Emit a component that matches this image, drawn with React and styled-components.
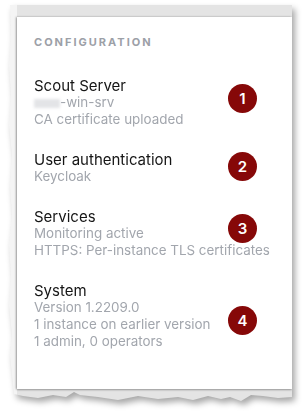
import React from 'react';
import styled, { createGlobalStyle } from 'styled-components';

const GlobalStyle = createGlobalStyle`
  html, body {
    margin: 0;
    padding: 0;
    background: #fff;
    font-family: Inter, "Noto Sans", "Liberation Sans", sans-serif;
  }
`;

const Page = styled.div`
  width: 303px;
  height: 416px;
  overflow: hidden;
  padding: 5px 0 0 8px;
  box-sizing: border-box;
`;

const Shadow = styled.div`
  width: 284px;
  filter: drop-shadow(3px 4px 3px rgba(0, 0, 0, 0.35));
`;

const Sheet = styled.div`
  width: 284px;
  height: 400px;
  box-sizing: border-box;
  padding: 12px 0 0 9px;
  background: linear-gradient(to right, #f4f4f4 0px, #f4f4f4 9px, #e4e4e4 9px);
  clip-path: polygon(
    2px 0, 284px 0, 284px 392px, 270px 393px, 255px 391px, 243px 390px,
    233px 396px, 222px 392px, 213px 394px, 200px 391px, 185px 395px,
    170px 392px, 150px 394px, 130px 391px, 110px 395px, 90px 392px,
    72px 390px, 66px 387px, 58px 392px, 45px 390px, 30px 393px,
    15px 391px, 6px 389px, 4px 370px, 2px 350px, 4px 330px, 1px 300px,
    3px 270px, 1px 240px, 4px 210px, 2px 180px, 4px 150px, 1px 120px,
    3px 90px, 1px 60px, 3px 30px
  );
`;

const Card = styled.div`
  width: 275px;
  height: 372px;
  box-sizing: border-box;
  background: #fff;
  box-shadow: -1px 0 2px rgba(0, 0, 0, 0.3), 0 1px 2px rgba(0, 0, 0, 0.25);
  padding: 18px 17px;
`;

const Heading = styled.div`
  font-size: 11px;
  line-height: 14px;
  font-weight: 700;
  letter-spacing: 2px;
  color: #9ca0a7;
  margin-bottom: 28px;
`;

const List = styled.div`
  display: flex;
  flex-direction: column;
  gap: 23px;
`;

const Section = styled.div`
  position: relative;
`;

const Title = styled.div`
  font-size: 15px;
  line-height: 17px;
  color: #151515;
`;

const Line = styled.div`
  font-size: 13.4px;
  line-height: 17px;
  color: #a2a6ad;
  white-space: nowrap;
`;

const Redacted = styled.span`
  display: inline-block;
  width: 26px;
  height: 9px;
  vertical-align: -1px;
  background: #e3e4e7;
  filter: blur(1.5px);
`;

const Badge = styled.div`
  position: absolute;
  left: 194px;
  top: ${p => p.$top}px;
  width: 29px;
  height: 29px;
  border-radius: 50%;
  background: #860808;
  color: #fff;
  font-size: 15px;
  font-weight: 600;
  display: flex;
  align-items: center;
  justify-content: center;
`;

const sections = [
  { title: 'Scout Server', lines: [null, 'CA certificate uploaded'], badge: 1, top: 7 },
  { title: 'User authentication', lines: ['Keycloak'], badge: 2, top: 1 },
  { title: 'Services', lines: ['Monitoring active', 'HTTPS: Per-instance TLS certificates'], badge: 3, top: 6 },
  { title: 'System', lines: ['Version 1.2209.0', '1 instance on earlier version', '1 admin, 0 operators'], badge: 4, top: 24 },
];

export default function App() {
  return (
    <>
      <GlobalStyle />
      <Page>
        <Shadow>
          <Sheet>
            <Card>
              <Heading>CONFIGURATION</Heading>
              <List>
                {sections.map(s => (
                  <Section key={s.badge}>
                    <Title>{s.title}</Title>
                    {s.lines.map((l, i) =>
                      l === null ? (
                        <Line key={i}><Redacted />-win-srv</Line>
                      ) : (
                        <Line key={i}>{l}</Line>
                      )
                    )}
                    <Badge $top={s.top}>{s.badge}</Badge>
                  </Section>
                ))}
              </List>
            </Card>
          </Sheet>
        </Shadow>
      </Page>
    </>
  );
}
